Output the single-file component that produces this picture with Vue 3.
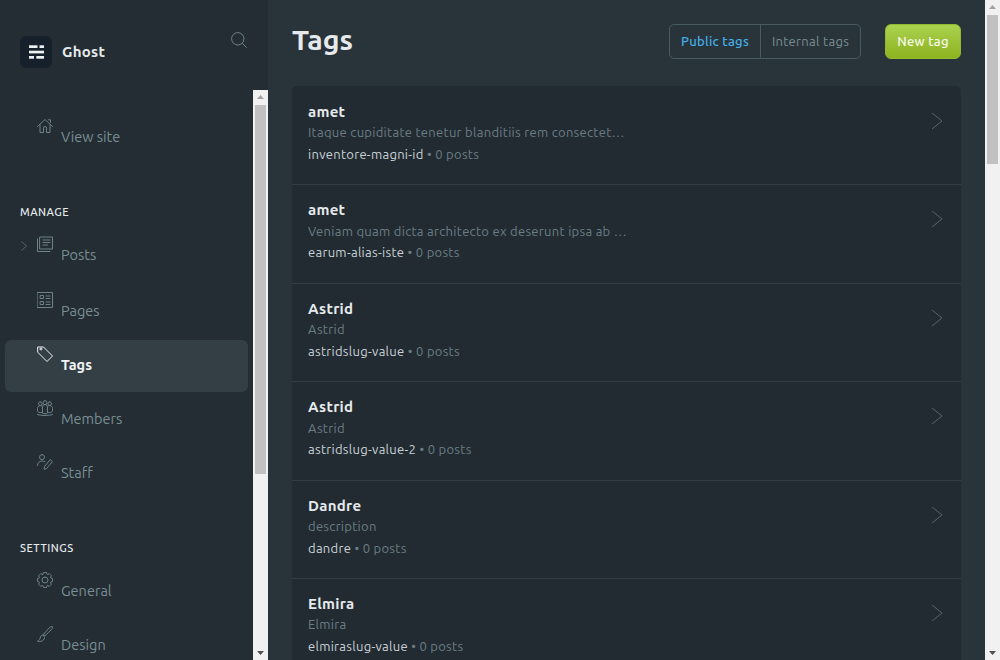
<script setup>
const topItems = [{ name: 'View site', icon: 'home' }]
const manage = [
  { name: 'Posts', icon: 'posts', caret: true, gap: 4 },
  { name: 'Pages', icon: 'pages', gap: 2 },
  { name: 'Tags', icon: 'tags', active: true, gap: 2 },
  { name: 'Members', icon: 'members', gap: 2 },
  { name: 'Staff', icon: 'staff', gap: 0 }
]
const settings = [
  { name: 'General', icon: 'general', gap: 2 },
  { name: 'Design', icon: 'design', gap: 2 }
]
const rows = [
  { name: 'amet', desc: 'Itaque cupiditate tenetur blanditiis rem consectetur quia dolores', slug: 'inventore-magni-id' },
  { name: 'amet', desc: 'Veniam quam dicta architecto ex deserunt ipsa ab quod repellat nihil', slug: 'earum-alias-iste' },
  { name: 'Astrid', desc: 'Astrid', slug: 'astridslug-value' },
  { name: 'Astrid', desc: 'Astrid', slug: 'astridslug-value-2' },
  { name: 'Dandre', desc: 'description', slug: 'dandre' },
  { name: 'Elmira', desc: 'Elmira', slug: 'elmiraslug-value' }
]
function gearPath() {
  const pts = []
  for (let k = 0; k < 8; k++) {
    const a = k * 45
    for (const [off, r] of [[-21, 6], [-11, 7.7], [11, 7.7], [21, 6]]) {
      const t = ((a + off - 90) * Math.PI) / 180
      pts.push((8 + r * Math.cos(t)).toFixed(2) + ' ' + (8 + r * Math.sin(t)).toFixed(2))
    }
  }
  return 'M' + pts.join('L') + 'Z M8 5a3 3 0 1 0 0 6 3 3 0 1 0 0-6'
}
const paths = {
  home: 'M.5 8.500 8 1.500l7.500 7M3 6.800V14.500h3.500V10a1.500 1.500 0 0 1 3 0v4.500H13V6.800M11.500 1.800h2v2.500',
  posts: 'M3 1h12.500v12H3zM.5 3v12.500H13M6 4h7M6 6.500h7M6 9h4.500',
  pages: 'M.5.500h15v15H.5zM3.500 3.500h3v3h-3zM3.500 9.500h3v3h-3zM9 4h4M9 6.500h4M9 10h4M9 12.500h4',
  tags: 'M1 1h5.500l9 9-5.500 5.500-9-9zM3 3a1 1 0 1 0 2 0 1 1 0 1 0-2 0',
  members: 'M8 .6a2 2 0 1 0 0 4 2 2 0 1 0 0-4M3.300 1.800a1.800 1.800 0 1 0 0 3.600 1.800 1.800 0 1 0 0-3.600M12.700 1.800a1.800 1.800 0 1 0 0 3.600 1.800 1.800 0 1 0 0-3.600M5.500 12.800V7a2.500 2.500 0 0 1 5 0v5.800a2.500 1 0 0 1-5 0M5.500 12.600H3.200C1.600 12.600.5 11.700.5 10.400V8.300c0-1.500 1.200-2.700 2.800-2.700.7 0 1.300.2 1.800.6M10.500 12.600h2.300c1.600 0 2.700-.9 2.700-2.200V8.300c0-1.500-1.200-2.700-2.800-2.700-.7 0-1.300.2-1.800.6M.5 14.600c3.500 1.200 11.500 1.200 15 0',
  staff: 'M5 .6a2.500 2.500 0 1 0 0 5 2.500 2.500 0 1 0 0-5M.5 11.500C.5 8.800 2.500 7 5 7c1.200 0 2 .2 3 .8M13.500 5.800l2 1.800-6 7-2.500.7.500-2.500z',
  general: gearPath(),
  design: 'M15.200 .8c-1-.5-2 0-3 1.100L6.500 8.300l1.500 1.400 6.200-5.900c1-1 1.500-2 1-3zM6.200 9c-2 0-2.700 1.300-3 3-.2 1.200-1 2-2.700 3.300 2.200.3 4.800.2 6-1.300 1.300-1.500 1.400-3.500-.3-5z'
}
</script>

<template>
  <div class="shell">
    <aside class="side">
      <div class="brand">
        <span class="logo">
          <svg width="15" height="14" viewBox="0 0 15 14" fill="#eef1f2">
            <rect x="0" y=".3" width="8.500" height="2.700" /><rect x="10.500" y=".3" width="4.500" height="2.700" />
            <rect x="0" y="5.700" width="15" height="2.700" />
            <rect x="0" y="11" width="5" height="2.700" /><rect x="7.300" y="11" width="7.700" height="2.700" />
          </svg>
        </span>
        <span class="brand-name">Ghost</span>
        <svg class="search" width="16" height="16" viewBox="0 0 16 16" fill="none" stroke="#6f8289" stroke-width="1">
          <circle cx="6.800" cy="6.800" r="6.200" /><path d="m11.300 11.300 4.400 4.400" />
        </svg>
      </div>
      <div class="side-body">
        <nav class="nav">
          <a v-for="item in topItems" :key="item.name" class="item">
            <svg class="icon" viewBox="0 0 16 16"><path :d="paths[item.icon]" /></svg>
            <span>{{ item.name }}</span>
          </a>
          <h3 class="label">MANAGE</h3>
          <a
            v-for="item in manage"
            :key="item.name"
            class="item"
            :class="{ active: item.active }"
            :style="{ marginBottom: item.gap + 'px' }"
          >
            <svg v-if="item.caret" class="caret" width="6" height="10" viewBox="0 0 6 10"><path d="m.5.500 5 4.500-5 4.500" /></svg>
            <svg class="icon" viewBox="0 0 16 16"><path :d="paths[item.icon]" /></svg>
            <span>{{ item.name }}</span>
          </a>
          <h3 class="label">SETTINGS</h3>
          <a
            v-for="item in settings"
            :key="item.name"
            class="item"
            :style="{ marginBottom: item.gap + 'px' }"
          >
            <svg class="icon" viewBox="0 0 16 16"><path :d="paths[item.icon]" /></svg>
            <span>{{ item.name }}</span>
          </a>
        </nav>
        <div class="bar">
          <svg class="arrow" width="15" height="15" viewBox="0 0 15 15"><path d="M7.500 5 11 9H4z" fill="#a3a3a3" /></svg>
          <div class="track"><div class="thumb side-thumb"></div></div>
          <svg class="arrow" width="15" height="15" viewBox="0 0 15 15"><path d="M7.500 10 4 6h7z" fill="#505050" /></svg>
        </div>
      </div>
    </aside>
    <main class="main">
      <header class="head">
        <h1>Tags</h1>
        <div class="tabs">
          <button class="tab on">Public tags</button>
          <button class="tab off">Internal tags</button>
        </div>
        <button class="new">New tag</button>
      </header>
      <ol class="list">
        <li v-for="(r, i) in rows" :key="i" class="row">
          <div class="info">
            <h3>{{ r.name }}</h3>
            <p class="desc">{{ r.desc }}</p>
            <p class="meta"><span class="slug">{{ r.slug }}</span> • 0 posts</p>
          </div>
          <svg class="chev" width="12" height="18" viewBox="0 0 12 18"><path d="m1 1 10 8-10 8" /></svg>
        </li>
      </ol>
    </main>
    <div class="bar">
      <svg class="arrow" width="15" height="15" viewBox="0 0 15 15"><path d="M7.500 5 11 9H4z" fill="#a3a3a3" /></svg>
      <div class="track"><div class="thumb page-thumb"></div></div>
      <svg class="arrow" width="15" height="15" viewBox="0 0 15 15"><path d="M7.500 10 4 6h7z" fill="#505050" /></svg>
    </div>
  </div>
</template>

<style>
html, body { margin: 0; background: #29343a; overflow: hidden; }
</style>

<style scoped>
.shell {
  font-family: Ubuntu, "Noto Sans", "Open Sans", sans-serif;
  display: flex;
  height: 660px;
  overflow: hidden;
  color: #f1f3f4;
}
.side {
  width: 268px;
  flex: none;
  background: #232d33;
  display: flex;
  flex-direction: column;
}
.brand {
  height: 90px;
  flex: none;
  box-sizing: border-box;
  padding: 36px 0 0 20px;
  display: flex;
  align-items: flex-start;
  position: relative;
}
.logo {
  width: 32px;
  height: 32px;
  border-radius: 6px;
  background: #15202a;
  display: flex;
  align-items: center;
  justify-content: center;
}
.brand-name {
  margin-left: 10px;
  font-size: 15px;
  font-weight: 700;
  line-height: 32px;
  letter-spacing: .3px;
  color: #e6eaec;
}
.search { position: absolute; left: 231px; top: 32px; }
.side-body { flex: 1; min-height: 0; display: flex; }
.nav {
  flex: 1;
  min-width: 0;
  overflow: hidden;
  padding-top: 22px;
}
.bar {
  width: 15px;
  flex: none;
  background: #f1f1f1;
  display: flex;
  flex-direction: column;
}
.arrow { flex: none; display: block; }
.track { flex: 1; min-height: 0; padding: 0 2px; }
.thumb { background: #c1c1c1; }
.side-thumb { height: 369px; }
.page-thumb { height: 149px; }
.item {
  position: relative;
  display: flex;
  height: 52px;
  margin: 0 5px;
  box-sizing: border-box;
  padding: 6px 0 0 32px;
  border-radius: 6px;
  font-size: 14.500px;
  color: #7a8d93;
}
.item span { margin: 9px 0 0 8px; line-height: 20px; }
.item.active { background: #343e45; color: #f1f3f4; font-weight: 700; }
.item.active .icon path { stroke: #eef1f2; }
.icon { width: 16px; height: 16px; flex: none; }
.icon path { fill: none; stroke: #6f8289; stroke-width: 1; stroke-linejoin: round; stroke-linecap: round; }
.caret { position: absolute; left: 16px; top: 11px; }
.caret path, .chev path { fill: none; stroke: #55636a; stroke-width: 1; }
.label {
  margin: 39px 0 9px 20px;
  font-size: 11px;
  font-weight: 500;
  line-height: 18px;
  letter-spacing: .5px;
  color: #e6eaec;
}
.main {
  flex: 1;
  min-width: 0;
  box-sizing: border-box;
  padding: 24px 24px 0;
  overflow: hidden;
  background: #29343a;
}
.head {
  display: flex;
  align-items: flex-start;
  height: 62px;
}
h1 {
  margin: 0;
  flex: 1;
  font-size: 28.500px;
  font-weight: 700;
  line-height: 30px;
  color: #e6eaec;
}
.tabs {
  display: flex;
  height: 35px;
  box-sizing: border-box;
  border: 1px solid #4a5a63;
  border-radius: 5px;
}
.tab {
  font: inherit;
  font-size: 13px;
  background: none;
  border: 0;
  padding: 0 0 2px;
  color: #7a8d93;
  letter-spacing: .3px;
}
.tab.off { width: 99px; }
.tab.on { width: 91px; color: #45aee6; font-weight: 500; border-right: 1px solid #4a5a63; }
.new {
  font: inherit;
  font-size: 13px;
  font-weight: 500;
  height: 35px;
  width: 76px;
  margin-left: 24px;
  padding: 0 0 2px;
  color: #f6f9ee;
  letter-spacing: .3px;
  border: 1px solid #93b92f;
  border-radius: 6px;
  background: linear-gradient(180deg, #aad24f, #8db31f);
}
.list {
  list-style: none;
  margin: 0;
  padding: 0;
  background: #222b32;
  border-radius: 5px;
}
.row {
  height: 98.400px;
  box-sizing: border-box;
  padding: 15px 18px 0 16px;
  border-top: 1px solid #323d44;
  display: flex;
  justify-content: space-between;
}
.row:first-child { border-top-color: transparent; }
.info { width: 320px; }
.info h3 {
  margin: 0;
  font-size: 15px;
  font-weight: 700;
  line-height: 20.400px;
  letter-spacing: .3px;
  color: #e6eaec;
}
.info p { margin: 0; font-size: 13px; letter-spacing: .29px; }
.info .desc {
  margin-top: 1px;
  line-height: 19.600px;
  color: #6b7d84;
  white-space: nowrap;
  overflow: hidden;
  text-overflow: ellipsis;
}
.info .meta { line-height: 20px; color: #6b7d84; margin-top: 1px; }
.slug { color: #c9d2d6; }
.chev { margin-top: 10px; }
</style>
